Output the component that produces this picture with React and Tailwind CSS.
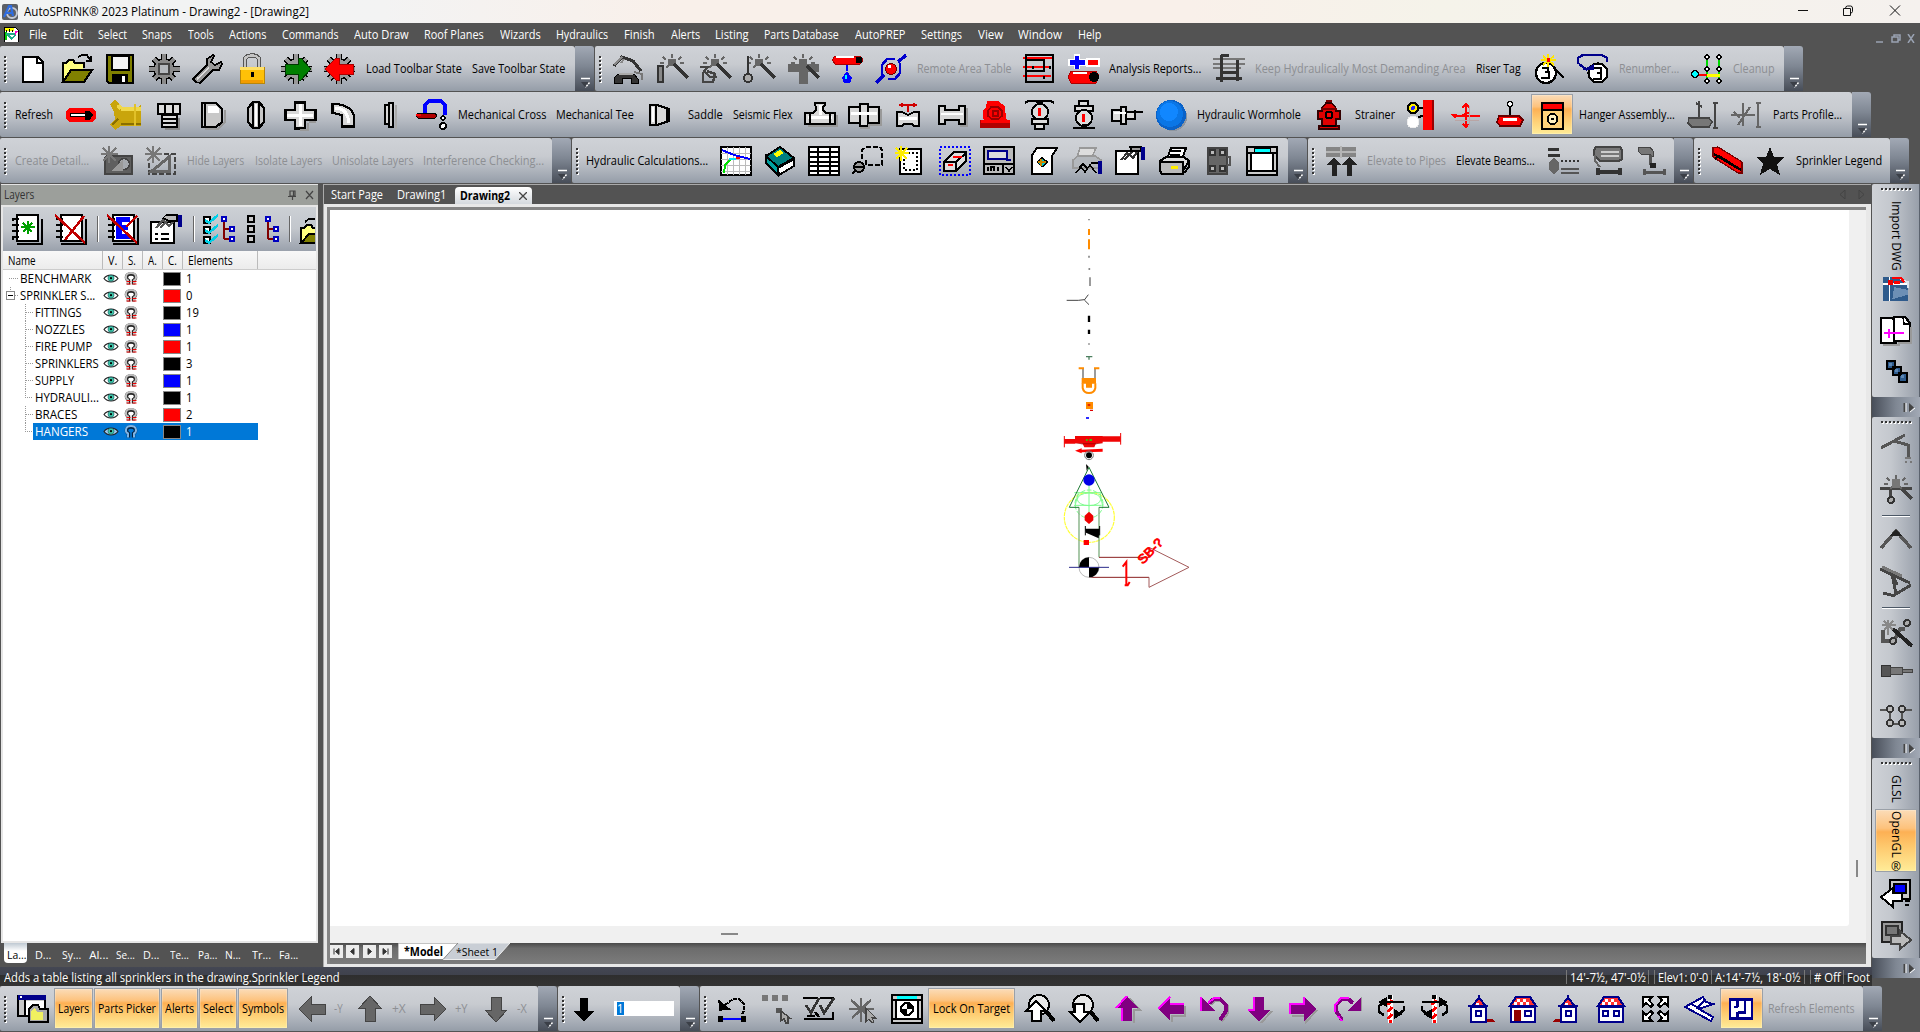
import React, { useLayoutEffect, useRef, useState } from "react";

const K = "#000";
const R = "#ff0000";
const G = "#666";
const D = "#333";
const N = "#00008b";
const L = "#c8c8c8";
const W = "#fff";
const c = (x, y, r) => `M${x - r} ${y}a${r} ${r} 0 1 0 ${2 * r} 0a${r} ${r} 0 1 0 ${-2 * r} 0`;
const O = "none";
const GEAR = "M16 0v30M1 15h31M6 5l20 20M26 5L6 25";
const UP = "M16 2l11 12h-6v13h-10v-13H5z";
const LEFT = "M3 15l12-12v7h14v10H15v7z";
const RIGHT = "M29 15L17 3v7H3v10h14v7z";
const DOWN = "M16 28l11-12h-6V3h-10v13H5z";
const SUN = "M16 0v4M7 3l3 3M25 3l-3 3M4 9h4M24 9h4M10 14l2-2M22 14l-2-2";
const SPARK = "M8 0v17M0 8h17M2 2l13 13M15 2L2 15";

// Each entry is a list of [path, fill, stroke, strokeWidth] on a 32x30 grid.
const ICONS = {
  new: [["M6 3h15l5 5v20H6z", W, K, 2], ["M20 3v6h6", O, K, 2]],
  open: [["M2 28V9h3l3-3h4l2 3h9v5", "#ffff80", K, 2], ["M2 28l8-12h21l-8 12z", "#808000", K, 2], ["M17 3l4-2h5l3 5M25 7h6M30 2v5", O, K, 2]],
  lopen: [["M2 29V14h3l3-3h4l2 3h9v4", "#ffff80", K, 2.2], ["M2 29l8-9h21l-8 9z", "#808000", K, 2], ["M6 8l4-3h6l4 4", O, K, 1.8]],
  save: [["M3 1h26v28H5l-2-2z", "#808000", K, 2], ["M8 2h17v14H8z", "#f4f4f4", K, 2], ["M8 20h15v9H8z", K, K, 1], ["M18 22h3v6h-3z", W, O, 0]],
  gear: [[GEAR, O, K, 6], [c(16, 15, 10), "#888", K, 1.5], [GEAR, O, "#8a8a8a", 3.5], [c(16, 15, 9), "#8a8a8a", O, 0], ["M11 10h10v10H11z", "#b4b8bd", "#444", 2]],
  wrench: [["M4 28l-3-3 14-14V5l6-4 1 1-3 6 4 3 6-3 1 2-3 6h-6L8 29z", "#999", K, 1.6], ["M5 25l12-11", O, "#ddd", 1.5]],
  lock: [["M9 14V6c0-6 14-6 14 0v8", O, "#555", 4.5], ["M9 14V6c0-6 14-6 14 0v8", O, "#c4c4c4", 2.5], ["M4 13h24v16H4z", "#ffc107", "#b8860b", 1], ["M4 13h24v3H4z", "#ffe066", O, 0], ["M5 26h22v3H5z", "#f39c00", O, 0], ["M15 18h3v5h-3z", K, O, 0]],
  load: [[GEAR, O, K, 6], [c(16, 15, 10), "#999", K, 1.5], [GEAR, O, "#999", 3.5], ["M5 10h13V4h3l10 11-10 11h-3v-6H5z", "#008000", "#003800", 1]],
  saveg: [[GEAR, O, K, 6], [c(16, 15, 10), "#999", K, 1.5], [GEAR, O, "#999", 3.5], ["M30 10H16V4h-3L2 15l11 11h3v-6h14z", R, "#a00", 1]],
  a1: [["M2 12l8-9 11 4 8 10", O, D, 3], ["M10 3l-8 8M12 5l-3 4", O, "#888", 2], ["M22 18l8 2v6", O, "#777", 2], ["M2 29v-5l4-4h16l4 5v4h-7v-5H10v5z", D, K, 1], ["M7 19h14v2H7z", "#aaa", O, 0]],
  wand1: [[SUN, O, G, 2], ["M12 5h8v7h-8z", G, O, 0], ["M18 10l14 14", O, D, 3], ["M2 12h5v16H2z", "#888", D, 2]],
  wand2: [[SUN, O, G, 2], ["M12 5h8v7h-8z", G, O, 0], ["M18 10l14 14", O, D, 3], ["M1 13h8l-4 4 6 6h7M4 18v10h10l2-8-8-3", O, "#444", 2.5]],
  wand3: [[SUN, O, G, 2], ["M12 5h8v7h-8z", G, O, 0], ["M18 10l14 14", O, D, 3], ["M5 2v20", O, D, 2.5], [c(5, 24, 4), "#aaa", D, 2]],
  wand4: [[SUN, O, G, 2], ["M12 5h8v7h-8z", G, O, 0], ["M1 10h30v7H20v12h-8V17H1z", G, G, 1], ["M20 12l12 12", O, D, 3]],
  drip: [["M4 2h25l3 4-3 4H4L1 6z", R, "#a00", 1], [c(28, 6, 3.5), K, O, 0], ["M5 3h18", O, W, 1.2], ["M16 11v6", O, "#00f", 2], ["M16 17l5 7-2 5h-6l-2-5z", "#0000ff", O, 0], ["M15 21v4", O, "#0ff", 2]],
  orbit: [["M1 29l8-8M23 8l8-7", O, "#0000cd", 3.4], ["M7 22V11l5-6h8M25 9v10l-5 6h-7", O, "#0000cd", 2.6], [c(16, 15, 5.5), R, "#600", 1], ["M13 11h3v3h-3z", W, O, 0]],
  area: [["M0 4h30M0 13h28M0 22h28", O, R, 2], ["M3 1h27v27H3zM3 6h18v11H3", O, K, 2.2], ["M10 12v3M21 22v3M27 12v3", O, K, 2]],
  report: [["M1 5h6V0h6v5h6v7h-6v3H7v-3H1z", W, O, 0], ["M3 6h5V2h4v4h6v5h-6v4H8v-4H3z", "#0000ff", O, 0], ["M20 5h12v7H20z", R, W, 1.5], ["M4 17h25l3 5-3 7H4l-3-6z", R, "#a00", 1], [c(27, 23, 5), K, O, 0], ["M6 19h14", O, W, 1.5]],
  ladder: [["M0 5h32M0 10h32M0 14h28", O, "#777", 2], ["M8 1v27M24 6v21M8 1h8M3 24h26M8 18h16", O, D, 3]],
  riser: [[c(13, 19, 10), W, K, 2.2], ["M9 14h6v4h-3 4v6H8", O, K, 2.4], ["M15 0v13M8 6h15M10 2l11 9M21 2l-11 9", O, "#ffe600", 2], ["M14 4h3v4h-3z", R, O, 0], ["M21 14l10 10", O, K, 2.5]],
  renum: [[c(21, 19, 9.5), W, K, 2.2], ["M17 14h7v5h-4 4v6h-8", O, K, 2.4], ["M1 10V4l5-3h19l5 3v4M2 10l8 6", O, N, 2.4], ["M5 16h12v-6z", N, O, 0]],
  clean: [["M16 3v24M28 3v24", O, "#00d800", 2.5], ["M16 20h12v2H16z", "#ff0", "#ff0", 1], ["M5 21h11", O, R, 2.5], [c(4, 20, 3.5), "#0ff", K, 1.5], [c(16, 3, 2), W, K, 1.5], [c(28, 3, 2), W, K, 1.5], [c(16, 15, 2), W, K, 1.5], [c(28, 15, 2), W, K, 1.5], [c(16, 27, 2), W, K, 1.5], [c(28, 27, 2), W, K, 1.5]],
  pipe: [["M4 8h24l3 4v6l-3 4H4l-3-4v-6z", R, O, 0], ["M5 13h18v3H5z", W, K, 1], ["M20 11h5l3 4-3 5h-5z", K, O, 0]],
  gold: [["M1 4l5-4 8 7h16l2-3v22H12l-6 4-5-5 5-6-1-7z", "#c9a50c", O, 0], ["M12 9h20M9 5l3 4", O, "#f0d84a", 4], ["M12 24h20M3 25l6-6", O, "#8a6f00", 2], ["M26 4v22", O, "#e2c128", 2]],
  bolt: [["M5 4h22v10H5z", "#ddd", K, 2.4], ["M12 4v10M20 4v10", O, K, 2], ["M9 15h15v12H9zM9 19h15M9 23h15", "#ddd", K, 2.2], ["M26 18v11H12", O, "#888", 2]],
  cap: [["M5 3h14l6 6v13l-6 5H5z", L, K, 2.4], ["M8 4v22", O, K, 1.6], ["M11 6h8l3 3v4H11z", W, O, 0], ["M28 10v12l-7 7H8", O, "#999", 2]],
  oval: [["M13 2h6l5 6v14l-5 6h-6l-5-6V8z", L, K, 2.4], ["M13 2v26M19 2v26", O, K, 1.8], ["M15 4h2v22h-2z", W, O, 0]],
  cross: [["M11 2h10v8h10v10H21v8H11v-8H1V10h10z", "#d8d8d8", K, 2.2], ["M16 4v22M3 15h26", O, W, 3], ["M10 2h12M10 28h12", O, K, 3], ["M1 9v12M31 9v12", O, K, 3], ["M24 23v7h-8M32 22h-7", O, "#999", 1.6]],
  elbow: [["M5 4v9l9 2v11h12V17C25 8 16 4 5 4z", "#d8d8d8", K, 2.2], ["M7 8c8 0 13 4 14 15", O, W, 3], ["M4 3v11M13 27h14", O, K, 2.8]],
  flange: [["M13 5h4V3h4v24h-4v-3h-4z", "#d8d8d8", K, 2.2], ["M17 4v22", O, K, 2], ["M24 5v24", O, "#aaa", 2]],
  hose: [["M9 13V5l4-4h12l4 4v10", O, "#0000ff", 3.4], ["M2 13h17l2 3-2 2H2l-2-2z", "#b00000", K, 1], ["M0 15h5", O, R, 2], [c(27, 18, 2), W, K, 1.5], [c(27, 26, 3), W, K, 2]],
  reducer: [["M5 5h7l12 4v12l-12 4H5z", "#d8d8d8", K, 2.3], ["M11 5v20M22 8v14", O, K, 2], ["M8 7v15", O, W, 2]],
  tee: [["M11 3h10v2l-2 2v3l3 3h9v11H1V13h8l3-3V7l-1-2z", "#d8d8d8", K, 2.2], ["M4 17h24M16 5v10", O, W, 3], ["M6 14v9M26 14v9", O, K, 1.6], ["M33 15v11H4", O, "#999", 1.6]],
  union: [["M1 7h11V4h8v3h11v16H20v3h-8v-3H1z", "#d8d8d8", K, 2.2], ["M12 5v20M20 5v20", O, K, 1.8], ["M3 13h26", O, W, 3], ["M33 9v16H21v3h-9", O, "#999", 1.6]],
  valve: [["M7 5h18M16 5v7M10 3v4M22 3v4", O, "#d00000", 2], ["M5 12h5l6 3 6-3h5v14h-5l-2-2h-8l-2 2H5z", "#d8d8d8", K, 2.2], ["M7 18h18", O, W, 3]],
  spool: [["M3 6h6v4h14V6h6v18h-6v-4H9v4H3z", "#d8d8d8", K, 2.3], ["M5 14h22", O, W, 2.5], ["M31 8v18h-7", O, "#999", 1.6]],
  pump: [["M9 1h9l7 5 2 13H5L4 12l3-4z", R, R, 1], ["M12 7h7l4 4v5l-4 3h-6l-4-3v-5zM14 11h5v5h-5z", O, "#9a0000", 1.6], ["M1 20h30v8H1z", "#b00000", O, 0], ["M2 21h29", O, R, 3]],
  pendant: [["M2 3l3-2h23l3 2M13 2h7", O, K, 2], [c(17, 12, 8), "#ddd", K, 2], ["M15 8h3v8h-3z", R, O, 0], ["M9 19h16v5H9zM12 24h9v5h-9z", "#ddd", K, 2]],
  upright: [["M12 1h9v5h-9zM8 6h18v5H8z", "#ddd", K, 2], [c(17, 18, 8), "#ddd", K, 2], ["M15 14h3v8h-3z", R, O, 0], ["M6 28h22M15 25h5", O, K, 2.4]],
  sidewall: [["M1 10h9v11H1zM10 7h5v17h-5z", "#ddd", K, 2], ["M15 12h9v7h-9zM24 10v10M24 12h8", "#ddd", K, 2], ["M3 13h12", O, W, 2]],
  sphere: [[c(18, 17, 14), "#8c949e", O, 0], [c(16, 15, 15), "#0a62c8", O, 0], [c(15, 14, 13), "#0a76e6", O, 0], [c(14, 12, 9), "#1187ff", O, 0]],
  hydrant: [["M13 3h6l4 5v3h4v8h-4v7h3v3H6v-3h3v-7H5v-8h4V8z", "#e00000", "#300", 1.4], ["M8 9h16M13 1h6", O, "#700", 2], [c(16, 15, 3.5), R, K, 2], ["M9 26h14", O, K, 1.5]],
  seismic: [["M17 0h10v30H17z", R, O, 0], ["M26 0h2v30h-2z", "#900", O, 0], [c(7, 8, 5), "#ffef00", K, 2.5], [c(7, 8, 2), "#22f", O, 0], [c(7, 22, 6), W, "#eee", 1], ["M12 8h5M12 17l5-1", O, K, 2]],
  brace: [["M16 4v22M3 16h27M12 8l4-4 4 4M6 18l-3-3 8 1 9-4M18 24l-2 3-3-3", O, R, 2], ["M5 20h24M19 6v20", O, "#b9a5a5", 1]],
  hanger: [[c(16, 4, 2.5), W, K, 1.5], ["M16 7v9", O, K, 2], ["M5 16h20l4 4-3 6H6l-3-4z", R, "#600", 1.5], ["M9 19h14", O, W, 3]],
  assembly: [["M6 3h21v26H6z", "#ffd27a", K, 2.5], ["M7 4h19v5H7z", "#f00", O, 0], ["M6 10h21", O, K, 2], [c(16.5, 19, 5), "#fff0c0", K, 2], [c(16.5, 19, 1.5), K, O, 0]],
  hang2: [["M12 1v16M9 3l6 4M28 3v25M26 3h5M26 28h5", O, "#444", 2], ["M2 18h20l3 4-3 5H5l-4-4z", "#777", "#444", 1.5]],
  brace2: [["M13 3v23M1 15h24M4 12l6 6M28 2v26M26 3h5M26 27h5M8 25l12-18", O, "#666", 2]],
  cam: [["M6 10h25v18H4V12z", "#5f5f5f", "#444", 2], [c(23, 18, 5.5), "#a5a9ae", "#444", 1.6], ["M10 25l12-12v12z", "#999", O, 0], [SPARK, O, "#777", 2]],
  cam2: [["M12 8h18v20H4V16", O, "#444", 2.4, "5 2"], ["M7 25l17-14v14z", O, "#666", 3], [SPARK, O, "#777", 2]],
  graph: [["M1 1h30v28H1z", W, K, 1.4], ["M7 1v28M13 1v28M19 1v28M25 1v28M1 7h30M1 13h30M1 19h30M1 25h30", O, "#bbb", 1], ["M2 4l12 5 16 4", O, "#0000ff", 2], ["M4 27l1-8 5-5", O, "#00e000", 2], ["M9 13h7", O, "#00e5ff", 2], ["M16 12h4", O, R, 2]],
  book: [["M2 10L16 1l14 11-16 9z", "#008080", K, 2], ["M2 10v7l12 12v-8z", "#00a0a0", K, 2], ["M14 22l16-9v7l-15 9z", W, K, 2], ["M9 8l7-4 4 3-7 4z", "#ffff00", O, 0]],
  grid: [["M1 1h30v28H1z", W, K, 2.4], ["M1 6h30M1 11h30M1 16h30M1 20h30M1 25h30M10 1v28M22 1v28", O, K, 1.8]],
  lasso: [["M14 1h14l2 3v15H14V14M10 13V4l4-3", O, K, 2, "5 2"], [c(7, 21, 5), "#999", K, 2], ["M0 28l4-4M2 21h10", O, K, 2.2]],
  newsel: [["M5 3h21v25H5z", W, K, 2.2], ["M9 7h13v17H9z", O, K, 1.5, "2 2"], ["M6 0v15M0 7h14M1 2l11 11M12 2L1 13", O, "#ffee00", 2]],
  box: [["M1 1h30v28H1z", O, "#0000ff", 2, "2 2"], ["M5 16l10-10h12v9L17 25H5z", "#ddd", K, 2.2], ["M5 16h12l10-9M17 16v9", O, K, 2], ["M14 11h9M9 19h5", O, R, 2.5]],
  panel: [["M1 1h30v27H1z", "#bbb", K, 2.2], ["M5 5h19v8H5z", "#ddd", N, 2], ["M24 5v9h4", O, N, 2], ["M1 18h30M20 18v10", O, K, 2], ["M5 21v4M8 25v-4h3v4M15 21v4M23 21l3 4 3-4", O, K, 1.6]],
  paper: [["M5 28V9l5-7h20l-5 8v18z", W, K, 2], ["M10 16l5-4 6 4-6 5z", "#00c8c8", K, 1.4], ["M14 13v7M11 16h8", O, "#cc8800", 1.4]],
  print2: [["M9 2h16l-4 9H6z", "#ddd", "#999", 1.5], ["M2 14l5-4h17l6 4v8H2z", "#b4b8bd", "#999", 1.5], ["M5 27l5-6 4 5 5-7 6 8M8 22l4-4 4 4", O, K, 1.6], ["M27 15h4v13h-4z", N, O, 0], ["M20 17h7", O, K, 2]],
  prop: [["M2 5h22v23H2z", W, K, 2.2], ["M7 14l6-7 6 5 4-6M10 14l8-8", O, "#333", 2], ["M16 1h11v4h-9z", "#999", K, 1.4], ["M27 1h4v13h-4z", N, O, 0]],
  printer: [["M9 13l4-11h15l-4 11z", W, K, 2], ["M13 5h10M12 9h10", O, K, 1.3], ["M2 15l6-4h18l5 4-5 8H2z", "#ddd", K, 2.2], ["M2 16h23v12H4l-2-3z", "#bbb", K, 2.2], ["M13 20h7v3h-7z", "#ffee00", O, 0], ["M26 27l5-6v-6", O, K, 2]],
  frame: [["M6 2h19v26H6z", "#666", "#444", 2], ["M8 4h5v5H8zM18 4h5v5h-5zM8 20h5v5H8zM18 20h5v5h-5z", "#bbb", "#333", 1.4], ["M25 11h3v8h-3", O, "#555", 2]],
  win: [["M1 1h30v28H1z", "#ccc", K, 2.2], ["M8 2h16v5H8z", "#00ffff", K, 1], ["M5 7h22v18H5z", W, K, 2], ["M1 7h30M1 25h30", O, K, 1.4]],
  elev: [["M1 1h30v10H1z", "#858585", O, 0], ["M16 0v12M1 6h30", O, "#b5b5b5", 1.4], ["M9 11l7 8h-4v11H7V19H2zM24 11l8 8h-5v11h-5V19h-5z", "#222", O, 0]],
  e1: [["M1 2h11v3H1zM1 8h12v3H1z", "#333", O, 0], ["M7 11l5 6v6l-5 6-5-6v-6z", "#666", O, 0], ["M14 15h18", O, D, 1.6, "2 2"], ["M14 23h18M14 27h18", O, "#555", 2.5]],
  e2: [["M5 1h24l2 3v9l-3 2H9L3 9V4z", "#777", "#444", 2], ["M10 6h18M10 10h18", O, "#ccc", 1.4], ["M4 9v6l5 6", O, "#666", 2], ["M7 26h22M7 22v7M29 22v7", O, "#333", 3.4]],
  e3: [["M4 1h11l3 4v5h-3V8H6L3 5z", "#777", "#444", 1], ["M15 9v8l3 4M9 26h20M9 23v6M29 23v6", O, "#555", 3], ["M15 17h6v5h-6z", "#222", O, 0]],
  beam: [["M3 2l5-1 24 15v11h-4L3 11z", "#f00", "#700", 1.2], ["M4 8l25 15M5 13l4-3 22 14", O, K, 2.2], ["M7 3l23 14", O, R, 3]],
  star: [["M16 1l4 10h10l-7 7 3 11-10-6-10 6 3-11-7-7h10z", "#111", O, 0]],
  lnew: [["M7 1h21v26H7z", W, K, 2.4], ["M7 30h25V5", O, K, 2], ["M2 5h7M2 11h7M2 17h7M2 23h7M3 4v3M3 22v4", O, K, 2], ["M18 7v13M11 13h14M13 9l9 9M22 9l-9 9", O, "#00a000", 1.8]],
  ldel: [["M7 1h21v26H7z", W, K, 2.4], ["M7 30h25V5", O, K, 2], ["M2 5h7M2 11h7M2 17h7M2 23h7", O, K, 2], ["M1 1l30 28M30 2L11 26", O, "#c00000", 2.4]],
  ledit: [["M7 1h21v26H7z", W, K, 2.4], ["M2 5h7M2 11h7M2 17h7M2 23h7M7 30h25V4", O, K, 2], ["M10 3h14v5h-8v3h6v5h-6v4h8v5H10z", "#0000ff", O, 0], ["M1 1l30 28M31 2L20 13", O, "#c00000", 2.4]],
  lprop: [["M1 8h23v21H1z", W, K, 2.2], ["M5 20h3M11 20h8M5 25h3M11 25h8", O, K, 1.6], ["M6 14l7-8 6 6 5-5M10 14l7-7", O, "#555", 2.4], ["M13 4l3-3h11v6h-8z", "#bbb", K, 1.4], ["M28 1h4v12h-4z", N, O, 0]],
  lchk: [["M2 3h6v6H2zM2 13h6v6H2zM2 23h6v6H2z", W, K, 1.6], ["M3 6l4 3 9-8M3 16l4 3 9-8M3 26l4 3 9-8", O, "#00d0e8", 2.4], ["M22 5v20M22 15h7M22 25h7", O, "#800000", 2], ["M20 3h4v4h-4zM28 13h4v4h-4zM28 23h4v4h-4z", W, "#0000c0", 1.8]],
  lbox: [["M2 2h6v6H2zM2 12h6v6H2zM2 22h6v6H2z", L, K, 2.2], ["M22 5v20M22 15h7M22 25h7", O, "#800000", 2], ["M20 3h4v4h-4zM28 13h4v4h-4zM28 23h4v4h-4z", W, "#0000c0", 1.8]],
  dock: [["M1 2h27v20H1z", L, K, 1.6], ["M1 1h28v5H1z", N, O, 0], ["M3 2h2v2H3z", W, O, 0], ["M8 6v17", O, K, 2], ["M9 7h18v14H9z", W, O, 0], ["M12 28V15l4-4h5l2 4h8v13z", "#aaa", K, 1.8], ["M14 26v-9l4-3 2 4h6v8z", "#f0f060", O, 0]],
  gl: [[LEFT, G, "#444", 1]], gu: [[UP, G, "#444", 1]], gr: [[RIGHT, G, "#444", 1]], gd: [[DOWN, G, "#444", 1]],
  kd: [["M16 28L6 17h6V4h8v13h6z", K, O, 0]],
  pu: [["M18 4l11 12h-6v13", O, "#999", 2], [UP, "#800080", O, 0], ["M5 14L16 2M11 14v13", O, "#ff00ff", 2]],
  pl: [["M17 28v-6h13V12", O, "#999", 2], [LEFT, "#800080", O, 0], ["M3 15L15 3M15 10h14", O, "#ff00ff", 2]],
  pr: [["M5 22h14v6l11-12", O, "#999", 2], [RIGHT, "#800080", O, 0], ["M3 20V10h14V3", O, "#ff00ff", 2]],
  pd: [["M18 29l11-12", O, "#999", 2], [DOWN, "#800080", O, 0], ["M5 16h6V3", O, "#ff00ff", 2]],
  undo: [["M11 10l5-4h6l6 6v7l-6 8", O, "#999", 4], ["M10 9l5-4h6l6 6v6l-6 9", O, "#800080", 4], ["M2 3v14h14z", "#800080", O, 0], ["M2 17V3M9 9l6-5h6", O, "#ff00ff", 2]],
  redo: [["M22 9l-5-4h-6l-6 6v6l6 9", O, "#800080", 4], ["M30 3v14H16z", "#800080", O, 0], ["M30 3v14", O, "#999", 1], ["M4 18v-7l6-7h8M11 27l-4-5", O, "#ff00ff", 2]],
  back: [["M9 11l8-6h6l5 5v7l-2 3", O, K, 2, "4 1"], ["M3 7l1 9 9-1z", K, K, 1.5], ["M4 25h25", O, "#0000ff", 2.5], ["M2 22h5v6H2zM25 22h5v6h-5z", K, O, 0]],
  dots: [["M2 1h6v6H2zM12 1h6v6h-6zM22 1h6v6h-6z", "#777", O, 0], ["M16 14h6v5h-6z", "#555", O, 0], ["M21 17v10l3-2 2 4h2v-5h2z", "#aaa", "#444", 1.4]],
  vees: [["M0 4h15M17 4h14", O, K, 2], ["M3 11l5 8 8-15M17 11l4 8 10-15", O, "#333", 2.6], ["M1 25h30M12 18l4 5M4 22h8M30 18v6", O, K, 2.4]],
  burst: [["M14 4v24M2 15h25M4 6l20 18M24 6L5 24", O, G, 2.6], ["M19 14v14l3-3 3 4 2-1-2-4h4z", "#aaa", "#444", 1.3]],
  target: [["M1 1h30v28H1z", "#ccc", K, 2.2], ["M6 2h20v4H6z", "#0ff", O, 0], ["M5 6h22v19H5z", W, K, 1.8], ["M1 6h30M1 25h30", O, K, 1.4], [c(16, 15, 6), W, K, 2.2], ["M16 15v-6q5 1 6 6zM16 15v6q-5-1-6-6z", K, O, 0]],
  zup: [[c(16, 11, 10), "#e8e8e8", K, 2], ["M24 18l7 9", O, K, 4], ["M13 7l10 10h-5v10H9V17H3z", W, K, 2]],
  zdn: [[c(16, 11, 10), "#e8e8e8", K, 2], ["M24 18l7 9", O, K, 4], ["M13 28L3 18h5V10h9v8h6z", W, K, 2]],
  rotl: [["M15 1v28", O, W, 5], ["M17 6l-4 5M17 13l-4 5M17 20l-4 5M15 26v3", O, R, 3], ["M29 8H9l-5 4v6l5 3M24 20l5-4v-4", O, K, 2.6], ["M3 8l9-5v10zM28 20l-9-5v10z", K, O, 0], [c(15, 3, 2.5), K, O, 0]],
  rotr: [["M15 1v28", O, W, 5], ["M17 6l-4 5M17 13l-4 5M17 20l-4 5M15 26v3", O, R, 3], ["M3 8h20l5 4v6l-5 3M8 20l-5-4v-4", O, K, 2.6], ["M29 8l-9-5v10zM4 20l9-5v10z", K, O, 0], [c(15, 3, 2.5), K, O, 0]],
  h1: [["M8 13h15v15H8z", W, N, 2.2], ["M16 4l7 8H9z", "#ff3030", N, 2], ["M13 9h3v2h-3z", W, O, 0], ["M16 1v3M5 12h20", O, N, 2.2], ["M13 17h5v5h-5z", O, N, 2], ["M24 25h5l3 3h-8z", "#900", O, 0]],
  h2: [["M4 13h24v15H4z", W, N, 2.2], ["M9 3h14l6 9H3z", "#ff3030", N, 2.2], ["M10 5h3v3h-3zM16 5h3v3h-3zM13 8h3v3h-3zM19 8h3v3h-3zM7 8h3v3H7z", W, O, 0], ["M7 16h7v11H7z", "#900000", O, 0], ["M18 17h6v5h-6z", O, N, 2]],
  h3: [["M10 13h15v15H10z", W, N, 2.2], ["M17 4l7 8H10z", "#ff3030", N, 2], ["M14 9h3v2h-3z", W, O, 0], ["M17 1v3M7 12h20", O, N, 2.2], ["M15 17h5v5h-5z", O, N, 2], ["M9 25H4l-3 3h8z", "#900", O, 0]],
  h4: [["M4 13h24v15H4z", W, N, 2.2], ["M9 3h14l6 9H3z", "#ff3030", N, 2.2], ["M10 5h3v3h-3zM16 5h3v3h-3zM13 8h3v3h-3zM19 8h3v3h-3zM7 8h3v3H7z", W, O, 0], ["M8 17h5v5H8zM19 17h5v5h-5z", O, N, 2]],
  extents: [["M4 3h9l-3 3 4 5-2 2-5-4-3 3zM29 3v9l-3-3-5 4-2-2 4-5-3-3zM4 27v-9l3 3 5-4 2 2-4 5 3 3zM29 27h-9l3-3-4-5 2-2 5 4 3-3z", W, K, 1.8]],
  iso: [["M2 13L20 3l3 5 7 2-14 5 14 8-2 4z", W, N, 2], ["M8 10l10 5M22 6l-9 9", O, N, 1.8]],
  plan: [["M3 4h26v22H3z", W, N, 2.6], ["M12 4v9M12 18v8M12 13h-4M21 4v15h-9", O, N, 2.4]],
  dwg: [["M2 3h16l11 10v16H2z", "#2f5b8c", O, 0], ["M14 14l15 3v5L12 27z", "#6d8fb5", O, 0], ["M2 11h27M9 3v26", O, W, 2], ["M18 4l11 5v6", O, "#dfe6ee", 2], ["M7 6h6v6H7z", "#e00", O, 0], ["M12 4h9l4 5M14 9h6", O, R, 2.4]],
  pages: [["M1 3h11l4 4v21H1z", W, K, 2.2], ["M14 2h11l5 6v18H14z", W, K, 2.2], ["M23 2l1 7h6", O, K, 1.6], ["M4 18h20M9 14v9", O, "#ff00ff", 2], ["M3 30h16v-2h12V12", O, "#999", 1.6]],
  chain: [["M7 4h8v8H7zM13 10h8v8h-8zM19 16h8v9h-8z", "#2d5a8c", K, 2.2], ["M9 6h3v3H9zM15 12h3v3h-3zM21 18h3v3h-3z", "#5d87b3", O, 0]],
  r1: [["M1 15l24-13M14 8l14 4v13", O, "#555", 3], ["M25 25h6M25 29h2M30 29h2", O, "#777", 2]],
  r2: [["M0 13h32M10 13v12M22 14l10 10", O, "#444", 3], [SUN, O, "#666", 1.5], ["M12 4h8v9h-8z", "#777", O, 0], [c(11, 25, 3), "#aaa", D, 2]],
  r3: [["M1 24L16 7l15 17", O, "#555", 3.4], ["M10 12l6-7 6 7z", "#222", O, 0]],
  r4: [["M0 3l30 14M12 7l4 21 15-9M12 7l5 12M3 27l12 3", O, "#444", 3], ["M2 1l20 9", O, "#777", 3]],
  r5: [["M8 3v15M2 8h14M4 4l9 9M13 4l-9 9", O, "#888", 1.6], ["M3 13v11h11l6-12h5", O, "#555", 3.4], ["M13 12l19 17", O, "#222", 4], [c(27, 6, 3), "#aaa", D, 2], [c(13, 24, 3), "#aaa", D, 2]],
  r6: [["M1 9h9v11H1z", "#555", "#333", 1], ["M10 11h12v7H10zM22 13h10v3H22z", "#777", "#444", 1]],
  r7: [["M0 8h10M22 8h10M10 8v14M22 8v14M10 22h12", O, "#555", 2.6], [c(10, 7, 3.2), "#bbb", D, 2], [c(22, 7, 3.2), "#bbb", D, 2], [c(10, 21, 3.2), "#bbb", D, 2], [c(22, 21, 3.2), "#bbb", D, 2]],
  r8: [["M10 2h20v19H10z", L, K, 2.4], ["M14 6h12v9H14z", "#0000ff", K, 1.6], ["M25 23h5M25 27h4", O, K, 2], ["M1 19l12-9v5h9v8h-9v6z", W, K, 2]],
  r9: [["M2 2h20v20H2z", "#999", "#222", 2.4], ["M6 6h12v9H6z", "#777", "#333", 1.6], ["M31 20L20 11v5h-9v8h9v5z", "#bbb", "#444", 2]],
};

function Glyph({ n, s = "w-8 h-[30px]" }) {
  return (
    <svg viewBox="0 0 32 30" className={`${s} shrink-0 overflow-visible`} shapeRendering="crispEdges">
      {ICONS[n].map(([d, f, k, w, dash], i) => (
        <path key={i} d={d} fill={f} stroke={k} strokeWidth={w} strokeDasharray={dash} />
      ))}
    </svg>
  );
}

// Text that is condensed horizontally to fill the given width.
function Fit({ w, children, className = "" }) {
  const ref = useRef(null);
  const [k, setK] = useState(1);
  useLayoutEffect(() => {
    setK(w / ref.current.offsetWidth);
  }, [w]);
  return (
    <span className={`inline-block shrink-0 whitespace-nowrap ${className}`} style={{ width: w }}>
      <span ref={ref} className="inline-block origin-left" style={{ transform: `scaleX(${k})` }}>{children}</span>
    </span>
  );
}

const I = ({ n }) => (
  <div className="flex w-[43.8px] shrink-0 items-center justify-center pl-[2px]"><Glyph n={n} /></div>
);
const Icons = ({ list }) => list.split(" ").map((n) => <I key={n} n={n} />);

const T = ({ w, off, children }) => (
  <div className={`shrink-0 pr-[5px] pl-[5.3px] ${off ? "text-[#8d8f93]" : "text-black"}`}><Fit w={w}>{children}</Fit></div>
);

// Arrow button with its axis label directly beside the arrow.
const Nudge = ({ n, w, children }) => (
  <div className="flex shrink-0 items-center pr-[4.500px] text-[#8d8f93]"><I n={n} /><Fit w={w} className="ml-[1px]">{children}</Fit></div>
);

const HOT = "border border-[#9aa0a8] bg-[linear-gradient(180deg,#fbdcb8_0%,#fdc27c_30%,#fdb054_36%,#fecb70_62%,#ffec98_100%)] shadow-[inset_0_0_0_1px_#fff3]";

function Grip() {
  return (
    <div className="mr-[3px] ml-1 flex w-[3px] shrink-0 flex-col gap-[2px]">
      {[0, 1, 2, 3, 4, 5, 6].map((i) => (
        <div key={i} className="h-[2px] w-[2px] bg-[#333] shadow-[1px_1px_0_#fff]" />
      ))}
    </div>
  );
}

function Bar({ w, children }) {
  return (
    <div className="mr-px flex h-[45px] shrink-0">
      <div className={`${w} flex shrink-0 items-center overflow-hidden rounded-l-[2px] rounded-tr-[3px] bg-[linear-gradient(180deg,#cfd2d7_0%,#c8cbd0_40%,#b4b9c1_65%,#959da8_100%)]`}>
        <Grip />
        {children}
      </div>
      <div className="flex w-[19px] items-end justify-center rounded-tr-[3px] bg-[linear-gradient(180deg,#a2a9b5_0%,#7f8793_45%,#474d58_100%)] pb-[2px] pl-px">
        <svg className="h-[12px] w-[11px]" viewBox="0 0 11 12">
          <path d="M1 1.500h9" stroke="#fff" strokeWidth="1.500" />
          <path d="M1 5h9l-5 5z" fill="#3b3f47" />
          <path d="M9.500 5.500L5.500 10.500" stroke="#fff" strokeWidth="1.500" strokeDasharray="2 1" />
        </svg>
      </div>
    </div>
  );
}

const MENU = [["File", 18], ["Edit", 19.6], ["Select", 29], ["Snaps", 30], ["Tools", 26], ["Actions", 37.5], ["Commands", 56.4], ["Auto Draw", 54.6], ["Roof Planes", 60], ["Wizards", 40.5], ["Hydraulics", 52.5], ["Finish", 31], ["Alerts", 29], ["Listing", 33.5], ["Parts Database", 75], ["AutoPREP", 50.5], ["Settings", 41.5], ["View", 25], ["Window", 43.7], ["Help", 23.5]];

const LAYERS = [
  ["BENCHMARK", 0, "bg-black", 1, 71.5], ["SPRINKLER S...", 0, "bg-[#f00]", 0, 75.5], ["FITTINGS", 1, "bg-black", 19, 47], ["NOZZLES", 1, "bg-[#00f]", 1, 50],
  ["FIRE PUMP", 1, "bg-[#f00]", 1, 57], ["SPRINKLERS", 1, "bg-black", 3, 64], ["SUPPLY", 1, "bg-[#00f]", 1, 39.5], ["HYDRAULI...", 1, "bg-black", 1, 64],
  ["BRACES", 1, "bg-[#f00]", 2, 42], ["HANGERS", 1, "bg-black", 1, 53],
];

function LayerRow({ row, i }) {
  const [name, child, color, count, w] = row;
  const sel = i === 9;
  return (
    <div className={`flex h-[17px] w-[255px] items-center text-[12.500px] ${sel ? "text-white" : "text-black"}`}>
      <div className={`flex h-full shrink-0 items-center ${child ? "w-[30px]" : "w-[17px]"}`}>
        <svg className="h-[17px] w-full" shapeRendering="crispEdges">
          {i === 0 && <path d="M6 8.500h9" stroke="#999" strokeDasharray="1 1" />}
          {i === 1 && (
            <>
              <path d="M7.500 0v4M12 8.500h4" stroke="#999" strokeDasharray="1 1" />
              <rect x="3.500" y="4.500" width="8" height="8" fill="#fff" stroke="#888" />
              <path d="M5 8.500h5" stroke="#000" />
            </>
          )}
          {child === 1 && <path d={i === 7 || i === 9 ? "M22.500 0v8.500h7" : "M22.500 0v17M22.500 8.500h7"} fill="none" stroke="#999" strokeDasharray="1 1" />}
        </svg>
      </div>
      <div className={`flex h-full flex-1 items-center ${sel ? "bg-[#0078d7]" : ""}`}>
        <div className={`shrink-0 ${child ? "w-[70px] pl-[2px]" : "w-[83px]"}`}><Fit w={w}>{name}</Fit></div>
        <svg className="mb-px h-[11px] w-4 shrink-0" viewBox="0 0 16 11">
          <path d="M1 5.500C4 1 12 1 15 5.500C12 10 4 10 1 5.500z" fill={sel ? "#9cc8ee" : "#fff"} stroke="#222" strokeWidth="1.100" />
          <circle cx="8" cy="5.200" r="3" fill="#3fc8a8" stroke="#1a6a70" strokeWidth=".7" />
          <circle cx="8" cy="5.200" r="1.100" fill="#000" />
        </svg>
        <svg className="ml-[5px] h-[15px] w-[14px] shrink-0" viewBox="0 0 14 15">
          <path d="M4.500 13.500V9.500C1.500 8 1.500 3 7 3s5.500 5 2.500 6.500v4" fill="none" stroke={sel ? "#024" : "#222"} strokeWidth="3.400" />
          <path d="M4 13.500V9.500C.8 8 1 2 7 2s6 6 3 7.500v4" fill="none" stroke={sel ? "#7fb4e4" : "#bdbdbd"} strokeWidth="2" />
          {!sel && <path d="M2.500 10.500h4M2.500 13h4M8.500 10.500h4M8.500 13h4" stroke="#e00" />}
        </svg>
        <div className={`ml-[25px] h-[14px] w-[18px] shrink-0 border border-[#888] ${color}`} />
        <span className="ml-[5px] origin-left scale-x-90">{count}</span>
      </div>
    </div>
  );
}

function LayersPanel() {
  const tools = [["lnew", "ml-[7px]"], ["ldel", "ml-[12px]"], ["ledit", "ml-[20px]"], ["lprop", "ml-[12px]"], ["lchk", "ml-[20px]"], ["lbox", "ml-[12px]"]];
  return (
    <div className="flex w-[318px] shrink-0 flex-col pl-px">
      <div className="flex h-[21px] items-center border-t border-[#e4e4e4] bg-[#9c9f9b] text-[#333]">
        <Fit w={30} className="ml-[3px]">Layers</Fit>
        <svg className="mr-[-1px] ml-auto h-[10px] w-[32px] shrink-0" viewBox="0 0 32 10">
          <path d="M3 1h5v5H3zM6.500 1v5M1 6.500h8M5.500 7v3M19 1l7 8M26 1l-7 8" fill="none" stroke="#444" strokeWidth="1.200" />
        </svg>
      </div>
      <div className="flex flex-1 flex-col overflow-hidden border-2 border-[#e6e6e6] bg-white">
        <div className="flex h-[44px] shrink-0 items-center overflow-hidden bg-[linear-gradient(180deg,#ccd0d5_0%,#c2c6cc_50%,#9aa1ac_100%)]">
          {tools.map(([n, m], i) => (
            <React.Fragment key={n}>
              <div className={`${m} shrink-0`}><Glyph n={n} /></div>
              {i % 2 === 1 && <div className="mr-[-12px] ml-[11px] h-[26px] w-px shrink-0 bg-[#666] shadow-[1px_0_0_#fff]" />}
            </React.Fragment>
          ))}
          <div className="ml-[21px] w-[16px] shrink-0 overflow-hidden"><Glyph n="lopen" /></div>
        </div>
        <div className="flex h-[19px] shrink-0 items-center border-b border-[#ccc] bg-[linear-gradient(180deg,#f8f8f8,#ececec)] text-[12px]">
          {[["Name", "w-[100px] pl-[5px]", 28], ["V.", "w-[20px] pl-[5px]", 9], ["S.", "w-[20px] pl-[5px]", 8], ["A.", "w-[20px] pl-[5px]", 9], ["C.", "w-[20px] pl-[5px]", 9], ["Elements", "w-[75px] pl-[5px]", 45]].map(([t, cl, w]) => (
            <div key={t} className={`${cl} h-full shrink-0 border-r border-[#bbb] leading-[20px]`}><Fit w={w}>{t}</Fit></div>
          ))}
        </div>
        <div>{LAYERS.map((r, i) => <LayerRow key={r[0]} row={r} i={i} />)}</div>
      </div>
      <div className="flex h-[24px] shrink-0 pl-[3px] text-[11.500px] text-white">
        {["La...", "D...", "Sy...", "Al...", "Se...", "D...", "Te...", "Pa...", "N...", "Tr...", "Fa..."].map((t, i) => (
          <div key={i} className={i === 0 ? "mr-[4px] h-[20px] w-[23px] shrink-0 rounded-b-[4px] bg-[linear-gradient(180deg,#bfc9d2,#fff_40%)] pl-[3px] leading-[24px] text-black" : "h-[20px] w-[27.100px] shrink-0 pl-[4px] leading-[24px]"}>
            <Fit w={t.length > 4 ? 19 : 16}>{t}</Fit>
          </div>
        ))}
      </div>
    </div>
  );
}

function Drawing() {
  return (
    <svg className="ml-[700px] h-[390px] w-[190px]" viewBox="0 0 570 1170" fill="none">
      <path d="M177 27v4M177 137v6M178 174v6M180 202v26M177 400v4" stroke="#888" strokeWidth="5" />
      <path d="M177 57v18M177 88v30" stroke="#ff8c00" strokeWidth="6" />
      <path d="M110 271h35l18-2M163 270l12-16M163 270l14 14" stroke="#444" strokeWidth="3" />
      <path d="M177 317v19M177 359v13" stroke="#000" strokeWidth="7" />
      <path d="M168 440h19M177 440v9" stroke="#4d8060" strokeWidth="4" />
      <path d="M159 475v30M195 475v30" stroke="#888" strokeWidth="5" />
      <path d="M146 475h16M192 475h16M158 520v14q3 15 19 15t19-15v-14" stroke="#ff8c00" strokeWidth="6" />
      <path d="M155 504h43v17h-12v12h-18v-12h-13zM168 576h21v21h-21z" fill="#ff8c00" />
      <path d="M173 585h8M180 601h9" stroke="#d00" strokeWidth="4" />
      <path d="M168 624h9" stroke="#00f" strokeWidth="5" />
      <path d="M135 678h83v22h-20l-5 12h-30l-6-12h-22zM103 687h33v14h-33zM218 679h54v16h-54z" fill="#f00505" />
      <path d="M103 678v34M272 669v35" stroke="#e00" strokeWidth="3" />
      <path d="M135 722l20-7v4l63-3v9l-63 2v3z" fill="#f00" />
      <path d="M135 700h83l-20 3h-43z" fill="#a00" />
      <path d="M168 690h5M178 690h8" stroke="#0f0" strokeWidth="5" />
      <circle cx="177" cy="736" r="13" stroke="#777" strokeWidth="3" />
      <circle cx="177" cy="736" r="9" fill="#000" />
      <circle cx="178" cy="922" r="75" stroke="#ff3" strokeWidth="3.500" strokeDasharray="12 2" />
      <g stroke="#7dfc8d" strokeWidth="3">
        <path d="M177 820v100M133 848h82M133 886h82M145 848l-10 40M210 848l8 40" />
        <ellipse cx="177" cy="868" rx="35" ry="19" />
        <circle cx="177" cy="882" r="42" strokeDasharray="14 5" />
      </g>
      <path d="M147 892V1072M207 892V1042" stroke="#7fae7f" strokeWidth="4" />
      <path d="M147 892h-29L177 772l60 120h-30" stroke="#1d7a33" strokeWidth="3" />
      <path d="M168 762l8 8-6 12z" fill="#000" />
      <circle cx="177" cy="810" r="17" fill="#0000e6" />
      <path d="M177 905l13 12v14l-13 11-13-11v-14z" fill="#e00" />
      <path d="M161 990h16v15h-16z" fill="#f00" />
      <path d="M165 956h44l-3 29-38-17z" fill="#000" />
      <path d="M166 948v28M209 948v28" stroke="#000" strokeWidth="3" />
      <path d="M207 1042H357M177 1102H357" stroke="#8a2020" strokeWidth="3" />
      <path d="M357 1042v-30l120 60-120 60v-30" stroke="#a35a5a" strokeWidth="3" />
      <circle cx="177" cy="1072" r="30" fill="#fff" stroke="#bbb" strokeWidth="3" />
      <path d="M177 1072v-30a30 30 0 0 0-30 30zM177 1072v30a30 30 0 0 0 30-30z" fill="#000" />
      <path d="M117 1072h120" stroke="#2a2a8a" strokeWidth="3" />
      <path d="M278 1070l11-14v70M284 1126h9l6-10" stroke="#f00" strokeWidth="6" />
      <text x="338" y="1064" transform="rotate(-45 338 1064)" fill="#f00" stroke="#f00" strokeWidth="2.500" fontSize="38" textLength="90" lengthAdjust="spacingAndGlyphs" fontFamily="Liberation Sans, sans-serif">SB-?</text>
    </svg>
  );
}

function DocArea() {
  return (
    <div className="ml-[5px] flex w-[1548px] flex-col border-t border-l border-[#aaa]">
      <div className="flex h-[19px] shrink-0 items-end pl-[7px] text-[12px] leading-[18px] text-white">
        <Fit w={52} className="mr-[14px]">Start Page</Fit>
        <Fit w={49} className="mr-[9px]">Drawing1</Fit>
        <div className="flex h-[17px] w-[77px] items-center rounded-t-[4px] bg-[linear-gradient(180deg,#fff,#d5d9de)] pl-[5px] font-bold text-black">
          <Fit w={50}>Drawing2</Fit>
          <svg className="ml-[9px] h-2 w-2" viewBox="0 0 8 8"><path d="M0 0l8 8M8 0L0 8" stroke="#444" strokeWidth="1.300" /></svg>
        </div>
        <svg className="mr-[7px] mb-[5px] ml-auto h-[9px] w-[24px]" viewBox="0 0 24 9"><path d="M5 0v9L0 4.500zM19 0v9l5-4.500z" fill="none" stroke="#444" /></svg>
      </div>
      <div className="flex flex-1 flex-col border-[3px] border-r-[5px] border-[#e8e8e8]">
        <div className="flex flex-1 flex-col border-[3px] border-r-0 border-b-0 border-[#858585] bg-[#f0f0f0]">
          <div className="flex h-[716px] shrink-0">
            <div className="w-[1519px] overflow-hidden rounded-br-[3px] bg-white"><Drawing /></div>
            <div className="flex flex-1 items-end pb-[49px] pl-[7px]"><div className="h-[17px] w-[2px] bg-[#888]" /></div>
          </div>
          <div className="h-[17px] shrink-0 pt-[7px]"><div className="ml-[391px] h-[2px] w-[17px] bg-[#888]" /></div>
          <div className="flex flex-1 items-start bg-[linear-gradient(180deg,#4a4a4a_0%,#6c6c6c_25%,#7c7c7c_100%)]">
            {["M9 3v6L5.500 6zM4 3v6", "M8 3v6L4.500 6z", "M5 3v6l3.500-3z", "M4 3v6l3.500-3zM9 3v6"].map((d) => (
              <svg key={d} className="mt-[2px] mr-[3.300px] h-[13px] w-[13px] bg-[#ececec]" viewBox="0 0 13 12"><path d={d} fill="#333" stroke="#333" /></svg>
            ))}
            <svg className="ml-[3px] h-[17px] w-[112px] text-[11.500px]" viewBox="0 0 112 17">
              <path d="M52 0h60l-15 16.500H45z" fill="#c9ced5" stroke="#eee" />
              <path d="M0 0h60L45 16.500H0z" fill="#fff" stroke="#888" />
              <text x="6" y="13" fontWeight="bold" textLength="39" lengthAdjust="spacingAndGlyphs">*Model</text>
              <text x="58" y="13" textLength="42" lengthAdjust="spacingAndGlyphs">*Sheet 1</text>
            </svg>
          </div>
        </div>
      </div>
    </div>
  );
}

function VCap() {
  return (
    <div className="flex h-[20px] w-full shrink-0 items-center justify-end bg-[linear-gradient(90deg,#484e59,#7f8793_50%,#a2a9b5)] pr-[4px]">
      <svg className="h-[11px] w-[13px]" viewBox="0 0 13 11"><path d="M1.500 1v9" stroke="#444" strokeWidth="2" /><path d="M3 1v9M7 10l5-4" stroke="#fff" /><path d="M6 1v9l5-4.500z" fill="#444" /></svg>
    </div>
  );
}

const VBAR = "flex shrink-0 flex-col items-center rounded-l-[2px] border-r border-[#5c636e] bg-[linear-gradient(90deg,#cfd2d7_0%,#c4c8ce_40%,#989faa_100%)] pt-[4px]";
const VGrip = () => (
  <div className="flex gap-[2px]">{[0, 1, 2, 3, 4, 5, 6, 7].map((i) => <div key={i} className="h-[2px] w-[2px] bg-[#333] shadow-[1px_1px_0_#fff]" />)}</div>
);
const VSep = () => <div className="h-px w-7 bg-[#4c5866] shadow-[0_1px_0_#fff]" />;

function RightBars() {
  return (
    <div className="flex w-12 shrink-0 flex-col">
      <div className={`${VBAR} h-[213px]`}>
        <VGrip />
        <div className="mt-[11px] h-[66px] text-[12px] leading-[16px] whitespace-nowrap text-black [writing-mode:vertical-rl]">Import DWG</div>
        <div className="mt-[6px]"><Glyph n="dwg" s="h-[30px] w-[30px]" /></div>
        <div className="mt-[12px]"><Glyph n="pages" /></div>
        <div className="mt-[12px]"><Glyph n="chain" /></div>
      </div>
      <VCap />
      <div className={`${VBAR} h-[321px]`}>
        <VGrip />
        <div className="mt-[10px]"><Glyph n="r1" /></div>
        <div className="mt-[12px] mb-[10px]"><Glyph n="r2" /></div>
        <VSep />
        <div className="mt-[8px]"><Glyph n="r3" /></div>
        <div className="mt-[12px] mb-[11px]"><Glyph n="r4" /></div>
        <VSep />
        <div className="mt-[9px]"><Glyph n="r5" /></div>
        <div className="mt-[9px]"><Glyph n="r6" /></div>
        <div className="mt-[16px]"><Glyph n="r7" /></div>
      </div>
      <VCap />
      <div className={`${VBAR} h-[200px]`}>
        <VGrip />
        <div className="mt-[11px] h-[34px] text-[12px] leading-[16px] whitespace-nowrap text-black [writing-mode:vertical-rl]">GLSL</div>
        <div className={`${HOT} flex h-[63px] w-[42px] items-center justify-center pt-[5px] text-[12px] tracking-[0.200px] whitespace-nowrap text-black [writing-mode:vertical-rl]`}>OpenGL®</div>
        <div className="mt-[6px]"><Glyph n="r8" /></div>
        <div className="mt-[12px]"><Glyph n="r9" /></div>
      </div>
      <VCap />
    </div>
  );
}

function Hot({ cl, w, children }) {
  return <div className={`${HOT} ${cl} mr-[1px] flex h-[41px] shrink-0 items-center justify-center text-black`}><Fit w={w}>{children}</Fit></div>;
}

function StatusBar() {
  const cells = [["14'-7½, 47'-0½", 76, "w-[82px]"], ["", 0, "w-[6px]"], ["Elev1: 0'-0", 50.500, "w-[57px]"], ["A:14'-7½, 18'-0½", 86, "w-[93px]"], ["", 0, "w-[6px]"], ["# Off", 26.500, "w-[33px]"], ["Foot", 23, "w-[29px]"]];
  return (
    <div className="flex h-[19px] shrink-0 items-center bg-[linear-gradient(180deg,#444753_0%,#3f424d_42%,#2e2e2e_43%,#333_100%)] text-[12px] text-white">
      <Fit w={336} className="mt-[3px] ml-[4px]">Adds a table listing all sprinklers in the drawing.Sprinkler Legend</Fit>
      <div className="ml-auto flex h-full">
        {cells.map(([t, w, cl], i) => (
          <div key={i} className={`${cl} mt-[3px] h-[14px] border-l border-[#777] pl-[3px] leading-[15px]`}>{t && <Fit w={w}>{t}</Fit>}</div>
        ))}
      </div>
    </div>
  );
}

export default function App() {
  return (
    <div className="flex h-[1032px] w-[1920px] flex-col overflow-hidden bg-[#535353] text-[12px] leading-[16px] [font-family:'Open_Sans','Noto_Sans',sans-serif]">
      <div className="flex h-[23px] shrink-0 items-center bg-[linear-gradient(90deg,#f1f3f3_0%,#f3f3f3_20%,#f9f0ea_35%,#f9f0ea_62%,#f5f3ea_75%,#f5f1ee_100%)] text-black">
        <svg className="ml-[2px] h-4 w-4" viewBox="0 0 16 16">
          <rect width="16" height="16" rx="2" fill="#5c6066" />
          <circle cx="10" cy="9" r="5" fill="none" stroke="#c5cbd6" strokeWidth="2" />
          <path d="M2 13L7 2h2l2 10M4 9h6" fill="none" stroke="#2f6de0" strokeWidth="2.200" />
        </svg>
        <Fit w={285} className="ml-[6px] text-[12.500px]">AutoSPRINK® 2023 Platinum - Drawing2 - [Drawing2]</Fit>
        <svg className="mr-[19px] mb-[2px] ml-auto h-[11px] w-[104px]" viewBox="0 0 104 11" fill="none" stroke="#111">
          <path d="M1 5.500h10M93 .5l10 10M103 .5l-10 10" />
          <path d="M46.500 3.500h7v7h-7zM48.500 3.500q0-2.500 2-2.500h3q2 0 2 2v3.500q0 1.500-2 1.500" />
        </svg>
      </div>
      <div className="flex h-[23px] shrink-0 items-center text-white">
        <svg className="mb-px ml-[3px] h-4 w-4" viewBox="0 0 16 16" shapeRendering="crispEdges">
          <path d="M1 1h11l3 3v12H1z" fill="#fff" stroke="#000" />
          <path d="M2 2h9v3H2z" fill="#ff0" /><path d="M2 6h2v8H2z" fill="#0c0" /><path d="M3 7h10v2l-5 5-4-4z" fill="#2a8" /><path d="M6 9l3 3 2-3z" fill="#fff" /><path d="M12 5h3l-3 5z" fill="#f0c" /><path d="M3 4v2M6 3v3M9 4v2" stroke="#000" />
        </svg>
        <div className="ml-[10px] flex gap-[15.550px]">
          {MENU.map(([t, w]) => <Fit key={t} w={w}>{t}</Fit>)}
        </div>
        <svg className="mt-[7px] mr-[5px] ml-auto h-[9px] w-[40px]" viewBox="0 0 40 9" fill="none" stroke="#9aa3b3" strokeWidth="1.500">
          <path d="M1 8h7M17 3h6v5h-6zM19 3V1h6v5h-2M33 0l6 9M39 0l-6 9" />
        </svg>
      </div>
      <div className="mb-px flex h-[45px] shrink-0">
        <Bar w="w-[575px]">
          <Icons list="new open save gear wrench lock load saveg" />
          <T w={95.600}>Load Toolbar State</T>
          <T w={93.500}>Save Toolbar State</T>
        </Bar>
        <Bar w="w-[1189px]">
          <Icons list="a1 wand1 wand2 wand3 wand4 drip orbit" />
          <T w={94.600} off>Remote Area Table</T>
          <Icons list="area report" />
          <T w={92}>Analysis Reports...</T>
          <Icons list="ladder" />
          <T w={210.500} off>Keep Hydraulically Most Demanding Area</T>
          <T w={45}>Riser Tag</T>
          <Icons list="riser renum" />
          <T w={60} off>Renumber...</T>
          <Icons list="clean" />
          <T w={41.500} off>Cleanup</T>
        </Bar>
      </div>
      <div className="mb-px flex h-[45px] shrink-0">
        <Bar w="w-[1852px]">
          <T w={38}>Refresh</T>
          <Icons list="pipe gold bolt cap oval cross elbow flange hose" />
          <T w={88}>Mechanical Cross</T>
          <T w={77.400}>Mechanical Tee</T>
          <Icons list="reducer" />
          <T w={35}>Saddle</T>
          <T w={59.400}>Seismic Flex</T>
          <Icons list="tee union valve spool pump pendant upright sidewall sphere" />
          <T w={104}>Hydraulic Wormhole</T>
          <Icons list="hydrant" />
          <T w={39.700}>Strainer</T>
          <Icons list="seismic brace hanger" />
          <div className={`${HOT} flex h-[41px] w-[42.500px] shrink-0 items-center justify-center`}><Glyph n="assembly" /></div>
          <T w={96}>Hanger Assembly...</T>
          <Icons list="hang2 brace2" />
          <T w={69.500}>Parts Profile...</T>
        </Bar>
      </div>
      <div className="mb-px flex h-[45px] shrink-0">
        <Bar w="w-[552px]">
          <T w={74.300} off>Create Detail...</T>
          <Icons list="cam cam2" />
          <T w={56.800} off>Hide Layers</T>
          <T w={67} off>Isolate Layers</T>
          <T w={81.300} off>Unisolate Layers</T>
          <T w={121} off>Interference Checking...</T>
        </Bar>
        <Bar w="w-[716px]">
          <div className="-ml-[1px]"><T w={122}>Hydraulic Calculations...</T></div>
          <Icons list="graph book grid lasso newsel box panel paper print2 prop printer frame win" />
        </Bar>
        <Bar w="w-[366px]">
          <Icons list="elev" />
          <T w={79} off>Elevate to Pipes</T>
          <T w={79}>Elevate Beams...</T>
          <Icons list="e1 e2 e3" />
        </Bar>
        <Bar w="w-[196px]">
          <div className="-ml-[1px] flex"><Icons list="beam star" /></div>
          <T w={86}>Sprinkler Legend</T>
        </Bar>
      </div>
      <div className="flex h-[802px] shrink-0">
        <div className="flex w-[1872px] shrink-0 flex-col">
          <div className="flex h-[783px] shrink-0"><LayersPanel /><DocArea /></div>
          <StatusBar />
        </div>
        <RightBars />
      </div>
      <div className="flex h-[45px] shrink-0">
        <Bar w="w-[538px]">
          <Icons list="dock" />
          <Hot cl="w-[39px]" w={31}>Layers</Hot>
          <Hot cl="w-[66px]" w={58}>Parts Picker</Hot>
          <Hot cl="w-[37px]" w={29}>Alerts</Hot>
          <Hot cl="w-[38px]" w={30}>Select</Hot>
          <Hot cl="w-[50px]" w={42}>Symbols</Hot>
          <Nudge n="gl" w={9}>-Y</Nudge>
          <Nudge n="gu" w={14}>+X</Nudge>
          <Nudge n="gr" w={13}>+Y</Nudge>
          <Nudge n="gd" w={10}>-X</Nudge>
        </Bar>
        <Bar w="w-[122px]">
          <div className="-ml-[7px]"><I n="kd" /></div>
          <div className="ml-[9px] h-[15px] w-[60px] bg-white pl-[3px] leading-[15px]"><span className="inline-block h-[13px] w-[7px] bg-[#0078d7] leading-[13px] text-white">1</span></div>
        </Bar>
        <Bar w="w-[1163px]">
          <div className="-ml-[1px] flex"><Icons list="back dots vees burst target" /></div>
          <Hot cl="w-[87px]" w={77}>Lock On Target</Hot>
          <div className="flex gap-[0.200px]"><Icons list="zup zdn pu pl undo pd pr redo rotl rotr h1 h2 h3 h4 extents iso" /></div>
          <div className={`${HOT} flex h-[41px] w-[43px] shrink-0 items-center justify-center`}><Glyph n="plan" s="h-[26px] w-[30px]" /></div>
          <T w={87} off>Refresh Elements</T>
        </Bar>
      </div>
    </div>
  );
}
